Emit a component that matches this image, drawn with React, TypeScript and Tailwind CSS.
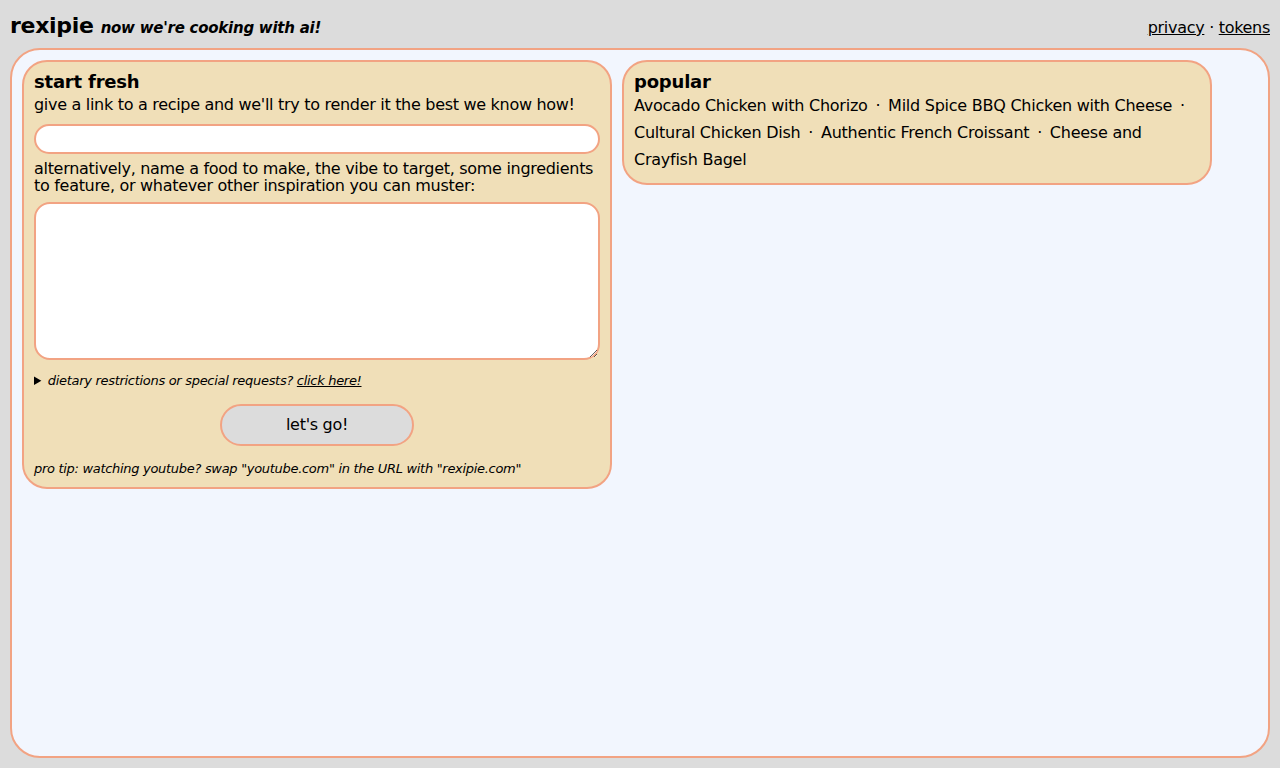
const popular = [
  "Avocado Chicken with Chorizo",
  "Mild Spice BBQ Chicken with Cheese",
  "Cultural Chicken Dish",
  "Authentic French Croissant",
  "Cheese and Crayfish Bagel",
];

function StartFresh() {
  return (
    <div className="w-[590px] shrink-0 rounded-[25px] border-2 border-[#f2a383] bg-[#f0dfb8] px-[10px] pt-[8px] pb-[9px]">
      <h2 className="text-[18px] leading-[24px] font-bold tracking-[-0.2px]">start fresh</h2>
      <p className="text-[16px] leading-[22px] tracking-[-0.3px]">
        give a link to a recipe and we'll try to render it the best we know how!
      </p>
      <input
        type="text"
        className="mt-[8px] block h-[30px] w-full rounded-full border-2 border-[#f2a383] bg-white px-3 text-[16px] outline-none"
      />
      <p className="mt-[6px] text-[16px] leading-[17px] tracking-[-0.3px]">
        alternatively, name a food to make, the vibe to target, some ingredients
        to feature, or whatever other inspiration you can muster:
      </p>
      <textarea className="mt-[8px] block h-[158px] w-full rounded-[16px] border-2 border-[#f2a383] bg-white p-2 text-[16px] outline-none" />
      <details className="mt-[12px] text-[13px] italic leading-[18px] tracking-[-0.3px]">
        <summary className="cursor-pointer">
          dietary restrictions or special requests?{" "}
          <a href="#" className="underline">
            click here!
          </a>
        </summary>
      </details>
      <div className="mt-[14px] flex justify-center">
        <button className="h-[42px] w-[194px] rounded-full border-2 border-[#f2a383] bg-[#dcdcdc] text-[16px] tracking-[-0.3px]">
          let's go!
        </button>
      </div>
      <p className="mt-[14px] text-[13px] italic leading-[18px] tracking-[-0.3px]">
        pro tip: watching youtube? swap "youtube.com" in the URL with "rexipie.com"
      </p>
    </div>
  );
}

function Popular() {
  return (
    <div className="w-[590px] shrink-0 rounded-[25px] border-2 border-[#f2a383] bg-[#f0dfb8] px-[10px] pt-[8px] pb-[10px]">
      <h2 className="text-[18px] leading-[24px] font-bold tracking-[-0.2px]">popular</h2>
      <p className="-mt-[2px] text-[16px] leading-[27px] tracking-[-0.25px]">
        {popular.map((name, i) => (
          <span key={name}>
            <a href="#">{name}</a>
            {i < popular.length - 1 && (
              <>
                {" "}
                <span className="mx-[3px]">·</span>{" "}
              </>
            )}
          </span>
        ))}
      </p>
    </div>
  );
}

export default function App() {
  return (
    <div
      className="flex h-screen flex-col bg-[#dcdcdc] px-[10px] pb-[10px] text-black"
      style={{ fontFamily: '"DejaVu Sans", Verdana, sans-serif' }}
    >
      <header className="flex h-[48px] shrink-0 items-baseline justify-between pt-[12px]">
        <div className="flex items-baseline gap-[7px]">
          <span className="text-[22px] font-bold leading-[28px] tracking-[-0.3px]">rexipie</span>
          <span className="text-[15px] font-bold italic tracking-[-0.25px]">
            now we're cooking with ai!
          </span>
        </div>
        <div className="text-[16px] tracking-[-0.3px]">
          <a href="#" className="underline">privacy</a>
          <span> · </span>
          <a href="#" className="underline">tokens</a>
        </div>
      </header>
      <main className="flex flex-1 items-start gap-[10px] rounded-[30px] border-2 border-[#f2a383] bg-[#f2f6fe] p-[10px]">
        <StartFresh />
        <Popular />
      </main>
    </div>
  );
}
